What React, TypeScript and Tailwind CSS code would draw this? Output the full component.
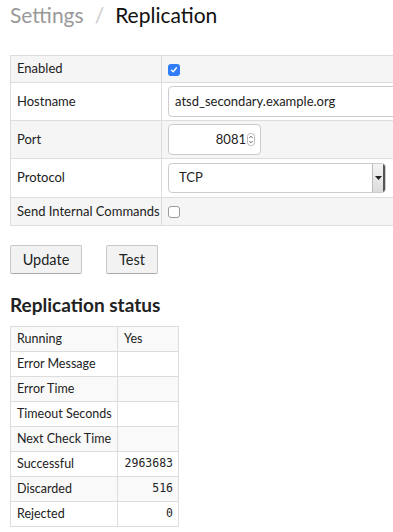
import React from "react";

const font = { fontFamily: 'Lato, "Open Sans", Arial, sans-serif' };

function Check({ checked }: { checked: boolean }) {
  return checked ? (
    <span className="inline-flex w-[12px] h-[12px] rounded-[3px] bg-[#2f7cf6] items-center justify-center">
      <svg width="8" height="8" viewBox="0 0 8 8">
        <path d="M1.5 4.2 L3.2 5.8 L6.5 1.8" stroke="white" strokeWidth="1.4" fill="none" strokeLinecap="round" strokeLinejoin="round" />
      </svg>
    </span>
  ) : (
    <span className="inline-block w-[12px] h-[12px] rounded-[3px] border border-[#9a9a9a] bg-white" />
  );
}

export default function App() {
  const rows = [
    { label: "Running", value: "Yes", mono: false },
    { label: "Error Message", value: "", mono: false },
    { label: "Error Time", value: "", mono: false },
    { label: "Timeout Seconds", value: "", mono: false },
    { label: "Next Check Time", value: "", mono: false },
    { label: "Successful", value: "2963683", mono: true },
    { label: "Discarded", value: "516", mono: true },
    { label: "Rejected", value: "0", mono: true },
  ];
  return (
    <div className="w-[393px] h-[532px] overflow-hidden bg-white text-[#222]" style={font}>
      <div className="pl-[10px] pt-[2px] text-[21px] leading-[26px] whitespace-nowrap">
        <span className="text-[#999]">Settings</span>
        <span className="text-[#ccc] mx-[11px]">/</span>
        <span className="text-[#111]">Replication</span>
      </div>

      <div className="ml-[10px] mt-[27px] w-[420px] border-t border-l border-[#ddd] text-[13px] whitespace-nowrap">
        <div className="flex h-[27px] bg-[#f5f5f5] border-b border-[#ddd]">
          <div className="w-[151px] border-r border-[#ddd] pl-[6px] flex items-center">Enabled</div>
          <div className="flex-1 pl-[6px] flex items-center pt-[1px]"><Check checked /></div>
        </div>
        <div className="flex h-[38px] bg-white border-b border-[#ddd]">
          <div className="w-[151px] border-r border-[#ddd] pl-[6px] flex items-center">Hostname</div>
          <div className="flex-1 pl-[6px] flex items-center">
            <div className="w-[240px] h-[31px] border border-[#ccc] rounded-[4px] flex items-center pl-[6px] bg-white">atsd_secondary.example.org</div>
          </div>
        </div>
        <div className="flex h-[38px] bg-[#f5f5f5] border-b border-[#ddd]">
          <div className="w-[151px] border-r border-[#ddd] pl-[6px] flex items-center">Port</div>
          <div className="flex-1 pl-[6px] flex items-center">
            <div className="w-[93px] h-[31px] border border-[#ccc] rounded-[4px] flex items-center justify-end pr-[5px] bg-white">
              <span>8081</span>
              <svg className="ml-[1px]" width="8" height="13" viewBox="0 0 8 13">
                <rect x="0.5" y="0.5" width="7" height="12" rx="3" fill="white" stroke="#bbb" />
                <path d="M2.3 5 L4 3.2 L5.7 5" stroke="#555" strokeWidth="0.9" fill="none" />
                <path d="M2.3 8 L4 9.8 L5.7 8" stroke="#555" strokeWidth="0.9" fill="none" />
              </svg>
            </div>
          </div>
        </div>
        <div className="flex h-[39px] bg-white border-b border-[#ddd]">
          <div className="w-[151px] border-r border-[#ddd] pl-[6px] flex items-center">Protocol</div>
          <div className="flex-1 pl-[6px] flex items-center">
            <div className="w-[218px] h-[30px] border border-[#ccc] rounded-[4px] flex items-center bg-white overflow-hidden">
              <span className="flex-1 pl-[10px]">TCP</span>
              <span className="w-[13px] h-full bg-gradient-to-b from-[#f4f4f4] to-[#dcdcdc] border-l border-[#bbb] flex items-center justify-center border-r-2 border-r-[#555]">
                <svg width="7" height="4" viewBox="0 0 7 4"><path d="M0 0 L7 0 L3.5 4 Z" fill="#222" /></svg>
              </span>
            </div>
          </div>
        </div>
        <div className="flex h-[28px] bg-[#f5f5f5] border-b border-[#ddd]">
          <div className="w-[151px] border-r border-[#ddd] pl-[6px] flex items-center">Send Internal Commands</div>
          <div className="flex-1 pl-[6px] flex items-center"><Check checked={false} /></div>
        </div>
      </div>

      <div className="flex gap-[24px] ml-[10px] mt-[19px] text-[14.5px]">
        <div className="w-[72px] h-[29px] bg-[#f2f2f2] border border-[#c8c8c8] border-b-[#aaa] rounded-[2px] flex items-center justify-center">Update</div>
        <div className="w-[52px] h-[29px] bg-[#f2f2f2] border border-[#c8c8c8] border-b-[#aaa] rounded-[2px] flex items-center justify-center">Test</div>
      </div>

      <div className="ml-[10px] mt-[18px] text-[19px] font-bold leading-[25px] text-[#222]">Replication status</div>

      <div className="ml-[10px] mt-[9px] w-[169px] border-t border-l border-[#ddd] text-[12.5px] whitespace-nowrap">
        {rows.map((r, i) => (
          <div key={r.label} className={`flex h-[25px] border-b border-[#ddd] ${i % 2 === 0 ? "bg-[#f9f9f9]" : "bg-white"}`}>
            <div className="w-[107px] border-r border-[#ddd] pl-[6px] flex items-center">{r.label}</div>
            <div
              className={`flex-1 border-r border-[#ddd] flex items-center ${r.mono ? "justify-end pr-[5px]" : "pl-[6px]"}`}
              style={r.mono ? { fontFamily: '"DejaVu Sans Mono", monospace', fontSize: "11.5px" } : undefined}
            >
              {r.value}
            </div>
          </div>
        ))}
      </div>
    </div>
  );
}
